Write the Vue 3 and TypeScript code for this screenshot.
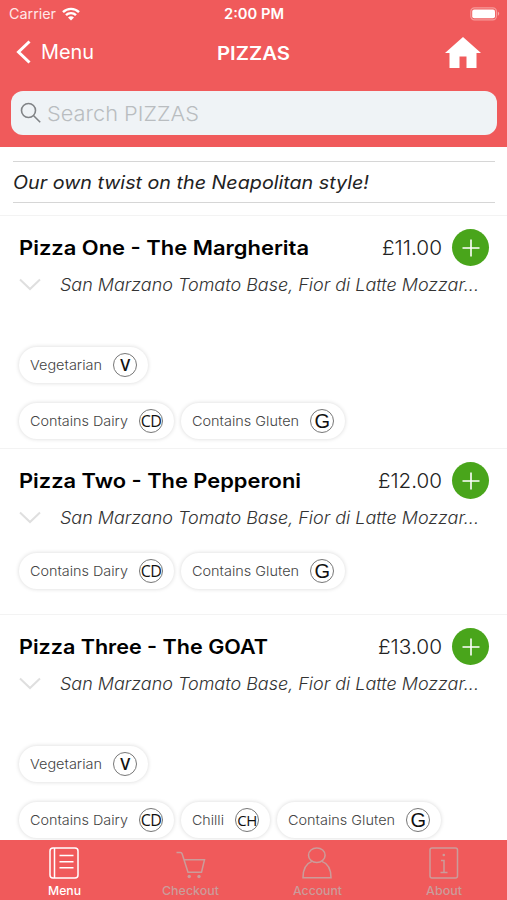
<script setup lang="ts">
interface Label {
  text: string
  width: number
}
interface Tag extends Label {
  code: string
}
interface Pizza {
  id: number
  name: Label
  price: Label
  roomy: boolean
  tagRows: Tag[][]
}

const vegetarian: Tag = { text: 'Vegetarian', width: 72, code: 'V' }
const dairy: Tag = { text: 'Contains Dairy', width: 98, code: 'CD' }
const gluten: Tag = { text: 'Contains Gluten', width: 107, code: 'G' }
const chilli: Tag = { text: 'Chilli', width: 32, code: 'CH' }

const description = 'San Marzano Tomato Base, Fior di Latte Mozzar...'

const pizzas: Pizza[] = [
  {
    id: 1,
    name: { text: 'Pizza One - The Margherita', width: 290 },
    price: { text: '£11.00', width: 60 },
    roomy: true,
    tagRows: [[vegetarian], [dairy, gluten]],
  },
  {
    id: 2,
    name: { text: 'Pizza Two - The Pepperoni', width: 282 },
    price: { text: '£12.00', width: 64 },
    roomy: false,
    tagRows: [[dairy, gluten]],
  },
  {
    id: 3,
    name: { text: 'Pizza Three - The GOAT', width: 249 },
    price: { text: '£13.00', width: 64 },
    roomy: true,
    tagRows: [[vegetarian], [dairy, chilli, gluten]],
  },
]

// Widens (or narrows) a label's letters so that its text spans the given width.
const vFit = {
  mounted(el: HTMLElement, binding: { value: number }) {
    const natural = el.getBoundingClientRect().width
    el.style.display = 'inline-block'
    el.style.width = `${binding.value}px`
    const inner = document.createElement('b')
    inner.textContent = el.textContent
    inner.style.display = 'inline-block'
    inner.style.fontWeight = 'inherit'
    inner.style.transformOrigin = '0 50%'
    inner.style.transform = `scaleX(${(binding.value / natural).toFixed(4)})`
    el.replaceChildren(inner)
  },
}
</script>

<template>
  <div class="screen">
    <header class="header">
      <div class="status">
        <div class="carrier">
          <span v-fit="47">Carrier</span>
          <svg class="wifi" viewBox="0 0 18 14" width="18" height="14">
            <path d="M1 5.2a11.3 11.3 0 0 1 16 0" />
            <path d="M4 8.2a7 7 0 0 1 10 0" />
            <path class="solid" d="M9 13.6 6 10.6a4.3 4.3 0 0 1 6 0z" />
          </svg>
        </div>
        <span v-fit="60" class="time">2:00 PM</span>
        <div class="power">
          <svg viewBox="0 0 30 14" width="30" height="14">
            <rect class="shell" x="0.8" y="0.8" width="25.6" height="12" rx="3.6" />
            <rect class="charge" x="2.2" y="2.4" width="22.8" height="8.8" rx="2" />
            <path class="tip" d="M27.8 4.6q2.8 2.2 0 4.4z" />
          </svg>
        </div>
      </div>

      <nav class="nav">
        <div class="back">
          <svg viewBox="0 0 16 26" width="16" height="26"><path d="M13.5 2.5 2.5 13 13.5 23.5" /></svg>
          <span v-fit="53">Menu</span>
        </div>
        <h1><span v-fit="73">PIZZAS</span></h1>
        <div class="home">
          <svg viewBox="0 0 36 31" width="36" height="31">
            <path d="M18 0 36 16H31.5V31H21.5V19.5H14.5V31H4.500V16H0z" />
          </svg>
        </div>
      </nav>

      <div class="search">
        <svg viewBox="0 0 22 22" width="22" height="22">
          <circle cx="8.5" cy="8.5" r="7" />
          <path d="m13.7 13.7 6.5 6.5" />
        </svg>
        <span v-fit="152">Search PIZZAS</span>
      </div>
    </header>

    <main class="content">
      <div class="intro"><span v-fit="356">Our own twist on the Neapolitan style!</span></div>

      <article v-for="pizza in pizzas" :key="pizza.id" class="pizza">
        <div class="top">
          <h2><span v-fit="pizza.name.width">{{ pizza.name.text }}</span></h2>
          <div class="price"><span v-fit="pizza.price.width">{{ pizza.price.text }}</span></div>
          <button class="add" type="button">
            <svg viewBox="0 0 18 18" width="18" height="18"><path d="M9 .5v17M.5 9h17" /></svg>
          </button>
        </div>
        <div class="details">
          <svg viewBox="0 0 22 13" width="22" height="13"><path d="M1 1.5 11 11 21 1.5" /></svg>
          <span v-fit="419">{{ description }}</span>
        </div>
        <div class="tags" :class="{ roomy: pizza.roomy }">
          <div v-for="(row, index) in pizza.tagRows" :key="index" class="row">
            <div v-for="tag in row" :key="tag.code" class="tag">
              <span v-fit="tag.width">{{ tag.text }}</span>
              <i class="badge" :class="tag.code.toLowerCase()">{{ tag.code }}</i>
            </div>
          </div>
        </div>
      </article>
    </main>

    <footer class="tabs">
      <div class="tab active">
        <svg viewBox="0 0 32 34" width="32" height="34">
          <rect x="2" y="2" width="28" height="30" rx="3" />
          <path d="M6.5 2v30M11.500 9.500h14M11.500 15.700h14M11.500 21.700h14" />
        </svg>
        <span v-fit="33">Menu</span>
      </div>
      <div class="tab">
        <svg viewBox="0 0 32 34" width="32" height="34">
          <path d="M1.5 6.500h4q1.200 0 1.600 1.200L13 26.200h13.500L29.500 13.800H9.300" />
          <circle class="dot" cx="14.200" cy="30.500" r="1.700" />
          <circle class="dot" cx="24" cy="30.500" r="1.700" />
        </svg>
        <span v-fit="57">Checkout</span>
      </div>
      <div class="tab">
        <svg viewBox="0 0 32 34" width="32" height="34">
          <ellipse cx="15.800" cy="9.200" rx="8.300" ry="7.300" />
          <path d="M11 15.400C5 17.500 2 22 2 31.800H30C30 22 27 17.500 20.800 15.400" />
        </svg>
        <span v-fit="49">Account</span>
      </div>
      <div class="tab">
        <svg viewBox="0 0 32 34" width="32" height="34">
          <rect x="2" y="2" width="27.500" height="30" rx="2" />
          <path d="M13 14.500h3v12M12.500 26.500h7" />
          <circle class="dot" cx="15.800" cy="9" r="1.300" />
        </svg>
        <span v-fit="36">About</span>
      </div>
    </footer>
  </div>
</template>

<style>
body {
  margin: 0;
}
</style>

<style scoped>
.screen {
  width: 507px;
  height: 900px;
  overflow: hidden;
  display: flex;
  flex-direction: column;
  background: #fff;
  color: #000;
  font-family: Inter, "Liberation Sans", sans-serif;
}
.screen * {
  box-sizing: border-box;
}
span {
  white-space: nowrap;
}
svg {
  display: block;
  flex: none;
  fill: none;
  stroke: currentColor;
}
.header {
  flex: none;
  height: 147px;
  background: #f05a5b;
  color: #fff;
}
.status {
  height: 27px;
  padding: 0 7px 0 9px;
  display: grid;
  grid-template-columns: 1fr auto 1fr;
  align-items: center;
  font-size: 14px;
}
.carrier {
  display: flex;
  align-items: center;
  gap: 6px;
  color: #ffe8e8;
}
.wifi {
  stroke-width: 2.4;
  color: #fff;
}
.wifi .solid {
  fill: #fff;
  stroke: none;
}
.time {
  margin-left: -1px;
  font-weight: 600;
}
.power {
  justify-self: end;
}
.shell {
  stroke: #f59a9a;
  stroke-width: 1.2;
}
.charge {
  fill: #fff;
  stroke: none;
}
.tip {
  fill: #f8a9a9;
  stroke: none;
}
.nav {
  height: 50px;
  padding: 0 26px 0 16px;
  display: grid;
  grid-template-columns: 1fr 73px 1fr;
  align-items: center;
}
.back {
  display: flex;
  align-items: center;
  gap: 9px;
  font-size: 20px;
}
.back svg {
  stroke-width: 3;
}
h1 {
  margin: 1px 0 0 5px;
  font-size: 18.5px;
  line-height: 24px;
  font-weight: 600;
}
.home {
  justify-self: end;
}
.home svg {
  fill: #fff;
  stroke: none;
}
.search {
  height: 44px;
  margin: 14px 10px 0 11px;
  padding-left: 9px;
  border-radius: 12px;
  background: #eff3f6;
  display: flex;
  align-items: center;
  gap: 5px;
  color: #b9bdc0;
  font-size: 20.5px;
  font-weight: 300;
}
.search svg {
  color: #808386;
  stroke-width: 1.6;
}
.content {
  flex: 1;
  min-height: 0;
  overflow: hidden;
}
.intro {
  height: 42px;
  margin: 14px 12px 12px 13px;
  border: solid #d6d6d6;
  border-width: 1px 0;
  display: flex;
  align-items: center;
  font-size: 18px;
  font-style: italic;
  font-feature-settings: "cv11";
  color: #222;
}
.pizza {
  border-top: 1px solid #f3f3f3;
  padding: 13px 18px 9px 19px;
}
.pizza:nth-of-type(2) {
  padding-bottom: 25px;
}
.top {
  height: 37px;
  display: flex;
  align-items: center;
}
h2 {
  margin: 0;
  flex: 1;
  font-size: 20px;
  line-height: 26px;
  font-weight: 600;
}
.price {
  font-size: 20.5px;
  font-weight: 300;
  color: #222;
}
.add {
  width: 37px;
  height: 37px;
  margin-left: 10px;
  padding: 0;
  border: 0;
  border-radius: 50%;
  background: #49a51b;
  color: #fff;
  display: grid;
  place-items: center;
}
.add svg {
  stroke-width: 1.6;
}
.details {
  height: 37px;
  display: flex;
  align-items: center;
  gap: 19px;
  font-size: 17px;
  font-weight: 300;
  font-style: italic;
  font-feature-settings: "cv11";
  color: #333;
}
.details svg {
  color: #dfdfdf;
  stroke-width: 2;
}
.tags {
  padding-top: 17px;
  display: flex;
  flex-direction: column;
  gap: 20px;
}
.tags.roomy {
  padding-top: 44px;
}
.row {
  display: flex;
  gap: 7px;
}
.tag {
  height: 36px;
  padding: 0 11px;
  border-radius: 18px;
  box-shadow: 0 0 4px rgba(0, 0, 0, 0.16);
  display: flex;
  align-items: center;
  gap: 11px;
  font-size: 13.5px;
  font-weight: 300;
  color: #444;
}
.badge {
  width: 24px;
  height: 24px;
  border: 1px solid #777;
  border-radius: 50%;
  display: grid;
  place-items: center;
  font: 600 16px/22px "Open Sans", sans-serif;
  letter-spacing: -0.6px;
  color: #111;
}
.badge.g {
  font: 500 20px/22px "Liberation Sans", sans-serif;
}
.badge.cd {
  font-weight: 500;
  font-size: 16px;
}
.badge.ch {
  font-weight: 500;
  font-size: 15px;
}
.tabs {
  flex: none;
  height: 60px;
  padding-right: 1px;
  background: #f05a5b;
  display: grid;
  grid-template-columns: repeat(4, 1fr);
}
.tab {
  padding: 6px 0 0 2px;
  display: flex;
  flex-direction: column;
  align-items: center;
  gap: 3px;
  font-size: 12px;
  line-height: 15px;
  font-weight: 500;
  color: #cb9c9a;
}
.tab svg {
  stroke-width: 1.5;
}
.tab.active {
  color: #fff;
}
.dot {
  fill: currentColor;
  stroke: none;
}
</style>
